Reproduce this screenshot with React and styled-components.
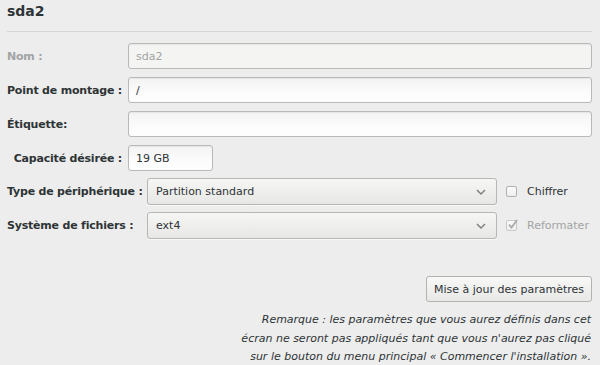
import React from 'react'
import styled, { createGlobalStyle } from 'styled-components'

const Global = createGlobalStyle`
  html, body {
    margin: 0;
    background: #ededed;
  }
  body {
    font-family: "DejaVu Sans", "Noto Sans", sans-serif;
    font-size: 11px;
    color: #2e3436;
  }
`

const Page = styled.div`
  width: 600px;
  height: 365px;
  padding: 0 8px 0 7px;
  box-sizing: border-box;
`

const Title = styled.h1`
  margin: 0;
  padding-top: 3px;
  height: 28px;
  font-size: 14px;
  font-weight: 700;
  color: #2e3436;
  border-bottom: 1px solid #d6d6d6;
`

const Form = styled.div`
  display: grid;
  grid-template-columns: 115px 1fr;
  column-gap: 6px;
  row-gap: 8px;
  margin-top: 11px;
  align-items: center;
`

const Label = styled.label`
  font-weight: 700;
  letter-spacing: -0.2px;
  color: ${(p) => (p.disabled ? '#a2a4a3' : '#2e3436')};
  text-align: ${(p) => (p.right ? 'right' : 'left')};
  white-space: nowrap;
`

const Input = styled.div`
  height: 26px;
  width: ${(p) => p.w || 'auto'};
  box-sizing: border-box;
  border: 1px solid #b9b9b9;
  border-radius: 3px;
  padding: 0 7px;
  display: flex;
  align-items: center;
  color: ${(p) => (p.disabled ? '#a2a4a3' : '#2e3436')};
  background: ${(p) =>
    p.disabled ? '#f4f4f2' : 'linear-gradient(#f3f3f3, #fdfdfd 70%)'};
  box-shadow: inset 0 1px 1px rgba(0, 0, 0, 0.06);
`

const SelectGrid = styled.div`
  display: grid;
  grid-template-columns: 135px 350px auto;
  column-gap: 5px;
  row-gap: 7px;
  margin-top: 7px;
  align-items: center;
`

const Select = styled.div`
  height: 27px;
  box-sizing: border-box;
  border: 1px solid #b6b6b3;
  border-radius: 3px;
  padding: 0 10px 0 8px;
  display: flex;
  align-items: center;
  justify-content: space-between;
  background: linear-gradient(#f6f6f5, #e7e7e6);
  box-shadow: 0 1px 0 rgba(255, 255, 255, 0.6);
`

const Check = styled.div`
  display: flex;
  align-items: center;
  gap: 10px;
  padding-left: 4px;
  color: ${(p) => (p.disabled ? '#a2a4a3' : '#2e3436')};
`

const Box = styled.span`
  width: 11px;
  height: 11px;
  box-sizing: border-box;
  border: 1px solid ${(p) => (p.disabled ? '#c8c8c8' : '#b0b0b0')};
  border-radius: 2px;
  background: linear-gradient(#fafafa, #efefef);
  position: relative;
`

const Tick = styled.svg`
  position: absolute;
  left: 0;
  top: -3px;
`

const Footer = styled.div`
  display: flex;
  flex-direction: column;
  align-items: flex-end;
  margin-top: 37px;
`

const Button = styled.button`
  font: inherit;
  color: #2e3436;
  height: 26px;
  padding: 0 7px;
  border: 1px solid #b3b3b1;
  border-radius: 3px;
  background: linear-gradient(#f8f8f7, #e8e8e7);
  cursor: pointer;
`

const Note = styled.p`
  margin: 9px 1px 0 0;
  font-style: italic;
  font-size: 11px;
  line-height: 18.5px;
  text-align: right;
  color: #2e3436;
`

const Chevron = () => (
  <svg width="10" height="6" viewBox="0 0 10 6">
    <path d="M1 1l4 4 4-4" fill="none" stroke="#7b7d7b" strokeWidth="1.4" />
  </svg>
)

const App = () => {
  return (
    <Page>
      <Global />
      <Title>sda2</Title>
      <Form>
        <Label disabled>Nom :</Label>
        <Input disabled>sda2</Input>
        <Label>Point de montage :</Label>
        <Input>/</Input>
        <Label>Étiquette:</Label>
        <Input />
        <Label right>Capacité désirée :</Label>
        <Input w="85px">19 GB</Input>
      </Form>
      <SelectGrid>
        <Label>Type de périphérique :</Label>
        <Select>
          Partition standard
          <Chevron />
        </Select>
        <Check>
          <Box />
          Chiffrer
        </Check>
        <Label>Système de fichiers :</Label>
        <Select>
          ext4
          <Chevron />
        </Select>
        <Check disabled>
          <Box disabled>
            <Tick width="12" height="12" viewBox="0 0 12 12">
              <path d="M2 6.5l2.5 3L10 2" fill="none" stroke="#a8a8a8" strokeWidth="1.8" />
            </Tick>
          </Box>
          Reformater
        </Check>
      </SelectGrid>
      <Footer>
        <Button>Mise à jour des paramètres</Button>
        <Note>
          Remarque : les paramètres que vous aurez définis dans cet
          <br />
          écran ne seront pas appliqués tant que vous n'aurez pas cliqué
          <br />
          sur le bouton du menu principal « Commencer l'installation ».
        </Note>
      </Footer>
    </Page>
  )
}

export default App
